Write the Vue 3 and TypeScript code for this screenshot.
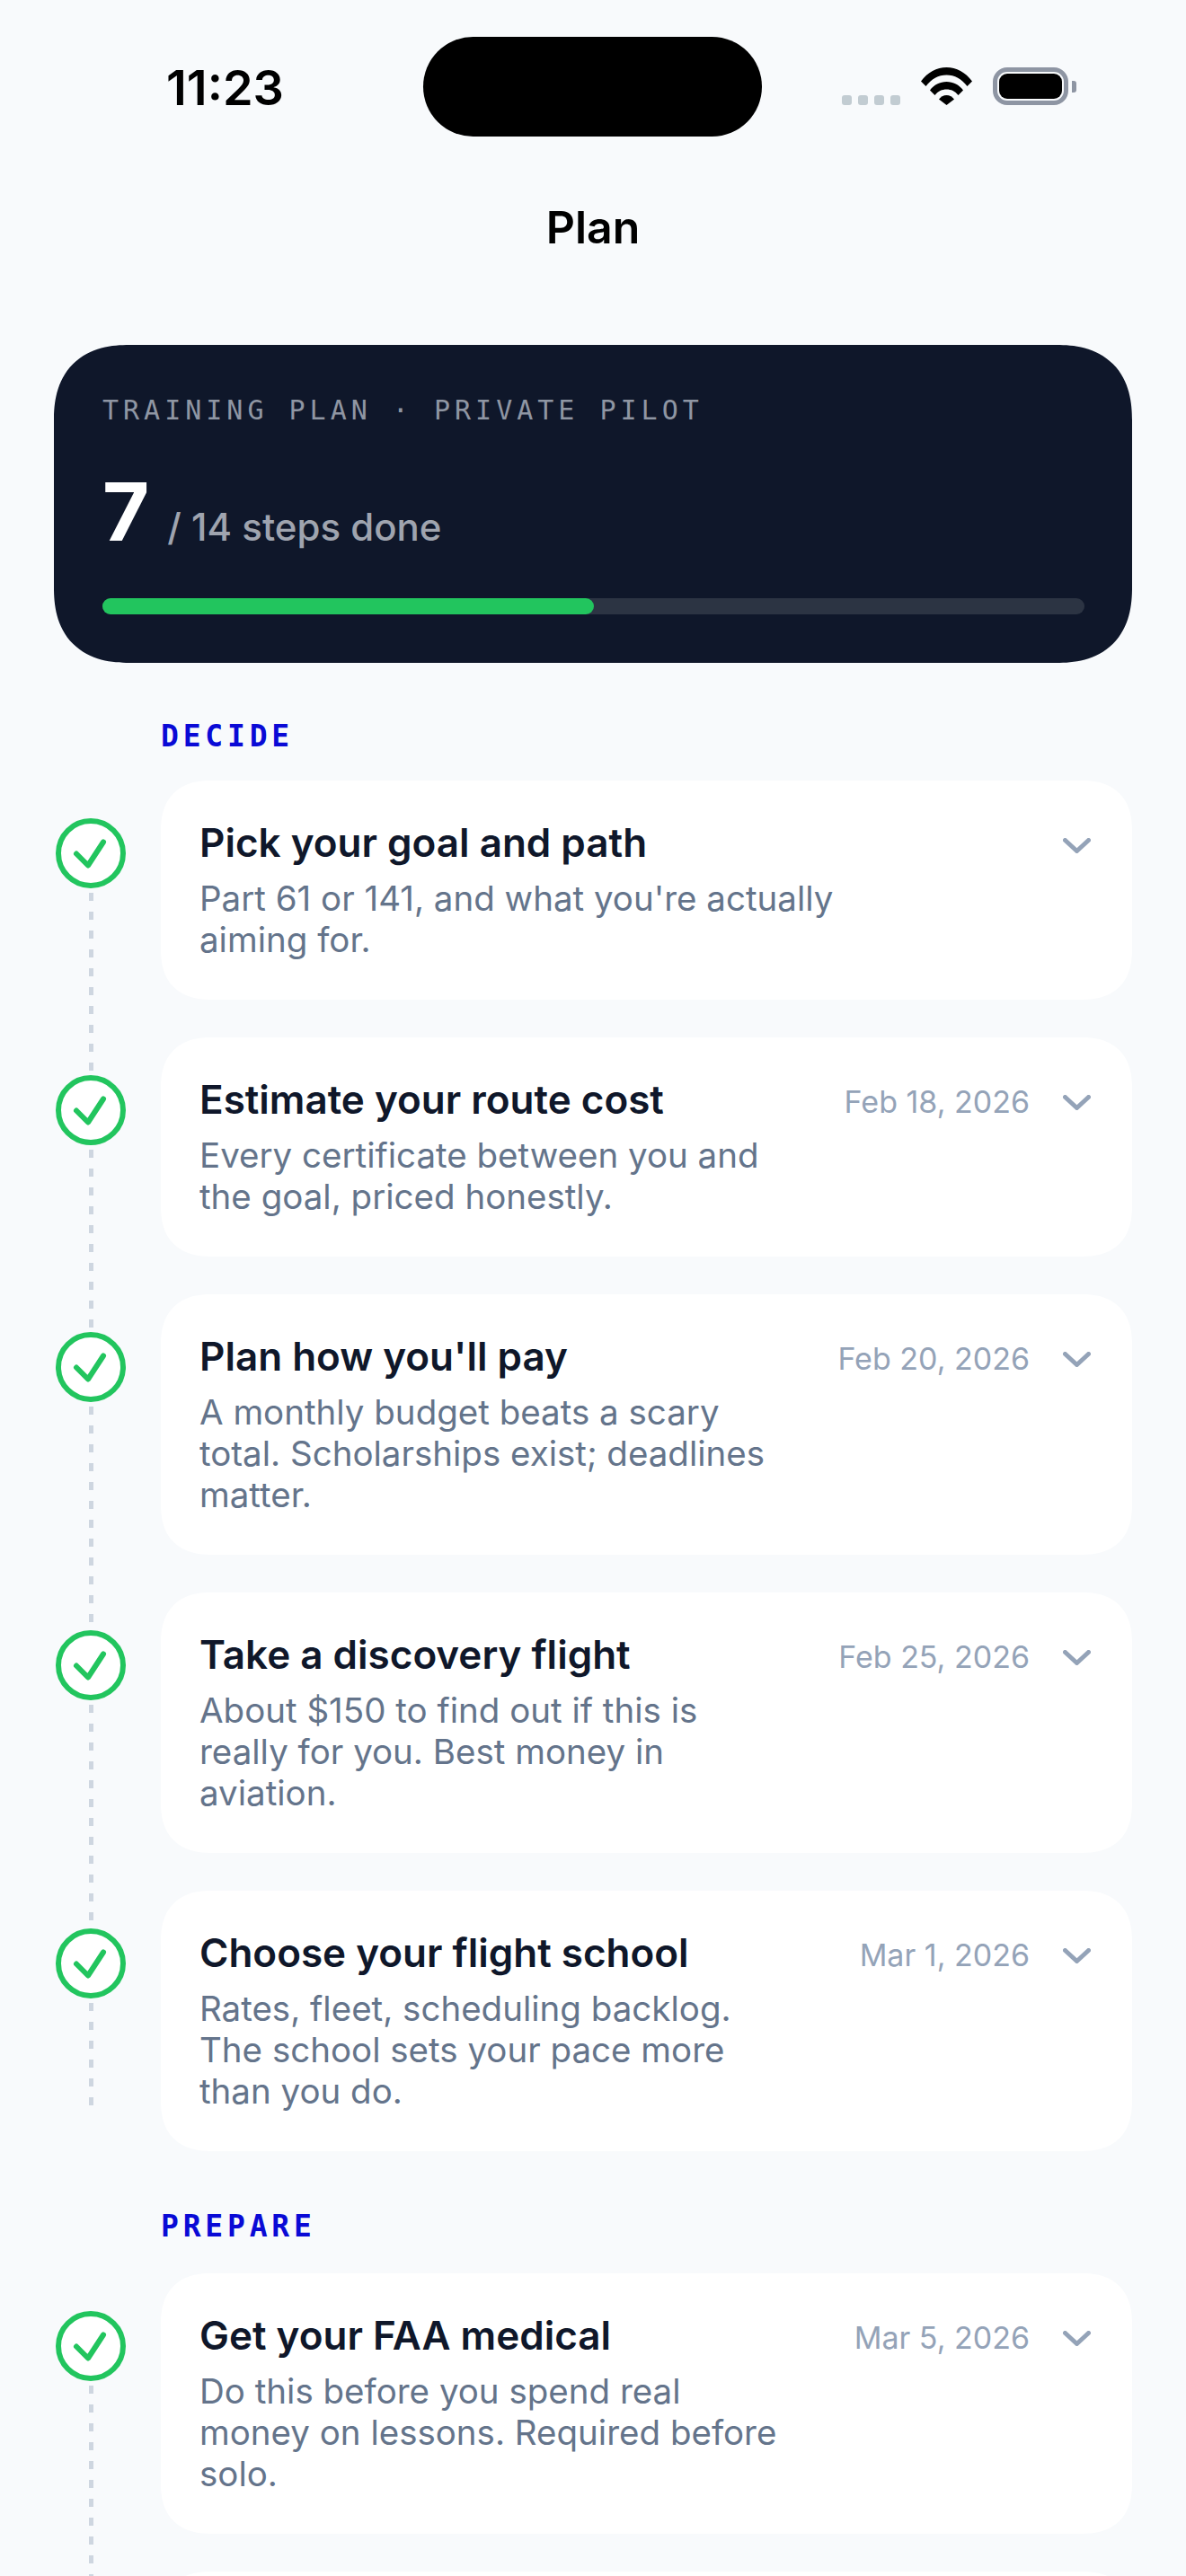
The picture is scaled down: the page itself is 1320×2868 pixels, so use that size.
<template>
  <div class="screen">
    <div class="status-bar">
      <span class="time">11:23</span>
      <div class="island"></div>
      <div class="status-right">
        <div class="signal">
          <span v-for="n in 4" :key="n" class="signal-dot"></span>
        </div>
        <svg class="wifi" width="57" height="42" viewBox="0 0 57 42">
          <path d="M0 15.500C7.500 5.500 17.500 0 28.500 0S49.500 5.500 57 15.500L51.500 21C45.500 13 37.500 8.500 28.500 8.500S11.500 13 5.500 21Z" fill="#000" />
          <path d="M10 25.500C14.500 19.500 21 16 28.500 16S42.500 19.500 47 25.500L41.500 31C38 26.500 33.500 24.500 28.500 24.500S19 26.500 15.500 31Z" fill="#000" />
          <path d="M20 35.500C22 33 25 31 28.500 31S35 33 37 35.500L28.500 42Z" fill="#000" />
        </svg>
        <div class="battery">
          <div class="battery-fill"></div>
          <div class="battery-nub"></div>
        </div>
      </div>
    </div>

    <div class="nav-title">Plan</div>

    <main class="content">
      <section class="summary">
        <div class="summary-label">TRAINING PLAN · PRIVATE PILOT</div>
        <div class="summary-count">
          <span class="count-num">{{ done }}</span>
          <span class="count-rest">/ {{ total }} steps done</span>
        </div>
        <div class="progress">
          <div class="progress-fill" :style="{ width: (done / total) * 100 + '%' }"></div>
        </div>
      </section>

      <section v-for="group in groups" :key="group.name" class="group" :class="{ 'group-closed': !group.peek }">
        <div class="group-label">{{ group.name }}</div>
        <div v-for="step in group.steps" :key="step.title" class="step">
          <div class="rail">
            <svg class="check" width="78" height="78" viewBox="0 0 78 78">
              <circle cx="39" cy="39" r="36" fill="#fff" stroke="#22c55e" stroke-width="6" />
              <path d="M23 39.500L36 52.500L53 26.500" fill="none" stroke="#22c55e" stroke-width="6" stroke-linecap="round" stroke-linejoin="round" />
            </svg>
            <div class="rail-line"></div>
          </div>
          <div class="card">
            <div class="card-body">
              <div class="card-title">{{ step.title }}</div>
              <div class="card-desc">
                <div v-for="line in step.lines" :key="line">{{ line }}</div>
              </div>
            </div>
            <span v-if="step.date" class="card-date">{{ step.date }}</span>
            <svg class="chevron" width="31" height="17" viewBox="0 0 31 17">
              <path d="M2.500 2.500L15.500 14.500L28.500 2.500" fill="none" stroke="#94a3b8" stroke-width="5" stroke-linecap="round" stroke-linejoin="round" />
            </svg>
          </div>
        </div>
        <div v-if="group.peek" class="step">
          <div class="rail"><div class="rail-line"></div></div>
          <div class="card card-peek"></div>
        </div>
      </section>
    </main>
  </div>
</template>

<script setup lang="ts">
interface Step {
  title: string;
  lines: string[];
  date?: string;
}

interface Group {
  name: string;
  steps: Step[];
  peek?: boolean;
}

const done = 7;
const total = 14;

const groups: Group[] = [
  {
    name: 'DECIDE',
    steps: [
      { title: 'Pick your goal and path', lines: ["Part 61 or 141, and what you're actually", 'aiming for.'] },
      { title: 'Estimate your route cost', lines: ['Every certificate between you and', 'the goal, priced honestly.'], date: 'Feb 18, 2026' },
      { title: "Plan how you'll pay", lines: ['A monthly budget beats a scary', 'total. Scholarships exist; deadlines', 'matter.'], date: 'Feb 20, 2026' },
      { title: 'Take a discovery flight', lines: ['About $150 to find out if this is', 'really for you. Best money in', 'aviation.'], date: 'Feb 25, 2026' },
      { title: 'Choose your flight school', lines: ['Rates, fleet, scheduling backlog.', 'The school sets your pace more', 'than you do.'], date: 'Mar 1, 2026' }
    ]
  },
  {
    name: 'PREPARE',
    peek: true,
    steps: [
      { title: 'Get your FAA medical', lines: ['Do this before you spend real', 'money on lessons. Required before', 'solo.'], date: 'Mar 5, 2026' }
    ]
  }
];
</script>

<style>
html,
body {
  margin: 0;
  background: #f8fafc;
}
</style>

<style scoped>
.screen {
  height: 2868px;
  overflow: hidden;
  background: #f8fafc;
  font-family: Inter, "Noto Sans", sans-serif;
}

.status-bar {
  display: flex;
  padding-top: 41px;
  height: 111px;
}

.time {
  width: 286px;
  padding-left: 185px;
  padding-top: 26px;
  font-size: 54px;
  font-weight: 600;
  line-height: 62px;
  color: #000;
}

.island {
  width: 377px;
  height: 111px;
  border-radius: 56px;
  background: #000;
}

.status-right {
  display: flex;
  align-items: flex-end;
  margin-left: 89px;
  height: 76px;
}

.signal {
  display: flex;
  gap: 7px;
  margin-right: 23px;
}

.signal-dot {
  width: 11px;
  height: 11px;
  border-radius: 3px;
  background: #c2ccd2;
}

.wifi {
  display: block;
  margin-right: 23px;
}

.battery {
  position: relative;
  width: 70px;
  height: 28px;
  padding: 2px;
  border: 5px solid #8e95a3;
  border-radius: 16px;
}

.battery-fill {
  height: 100%;
  border-radius: 9px;
  background: #000;
}

.battery-nub {
  position: absolute;
  top: 10px;
  right: -14px;
  width: 5px;
  height: 13px;
  border-radius: 0 3px 3px 0;
  background: #8e95a3;
}

.nav-title {
  height: 202px;
  line-height: 202px;
  margin-bottom: 30px;
  text-align: center;
  font-size: 50px;
  font-weight: 600;
  color: #000;
}

.content {
  padding: 0 60px;
}

.summary {
  box-sizing: border-box;
  height: 354px;
  padding: 55px 53px 0 54px;
  border-radius: 84px;
  corner-shape: superellipse(1.25);
  background: #0f172a;
}

.summary-label {
  font-family: "DejaVu Sans Mono", monospace;
  font-size: 30px;
  line-height: 36px;
  letter-spacing: 5px;
  color: #8f96a3;
}

.summary-count {
  display: flex;
  align-items: baseline;
  gap: 20px;
  margin-top: 40px;
}

.count-num {
  font-size: 90px;
  font-weight: 700;
  line-height: 109px;
  color: #fff;
}

.count-rest {
  font-size: 42px;
  font-weight: 500;
  color: #9fa4af;
}

.progress {
  height: 18px;
  margin-top: 42px;
  border-radius: 9px;
  background: #2c3443;
}

.progress-fill {
  height: 100%;
  border-radius: 9px;
  background: #22c55e;
}

.group-label {
  margin: 62px 0 29px 119px;
  font-family: "DejaVu Sans Mono", monospace;
  font-size: 33px;
  font-weight: 700;
  line-height: 40px;
  letter-spacing: 4.8px;
  color: #0a0ad6;
}

.group + .group .group-label {
  margin-top: 64px;
  margin-bottom: 32px;
}

.group {
  display: flex;
  flex-direction: column;
}

.step {
  display: grid;
  grid-template-columns: 80px 1fr;
  column-gap: 39px;
  padding-bottom: 42px;
}

.group-closed .step:last-child {
  padding-bottom: 0;
}

.rail {
  display: flex;
  flex-direction: column;
  align-items: center;
  margin-left: 2px;
  padding-top: 42px;
}

.check {
  display: block;
  flex-shrink: 0;
  margin-bottom: 5px;
}

.rail-line {
  flex: 1;
  width: 5px;
  margin-bottom: -79px;
  background: repeating-linear-gradient(to bottom, #ced6e0 0, #ced6e0 9px, transparent 9px, transparent 21px);
}

.group-closed .step:last-child .rail-line {
  margin-bottom: 46px;
}

.card {
  display: flex;
  align-items: flex-start;
  padding: 42px 28px 44px 43px;
  border-radius: 56px;
  corner-shape: superellipse(1.25);
  background: #fff;
}

.card-peek {
  height: 300px;
}

.card-body {
  flex: 1;
  min-width: 0;
}

.card-title {
  font-size: 44px;
  font-weight: 600;
  line-height: 54px;
  color: #0f172a;
}

.card-desc {
  margin-top: 12px;
  font-size: 38.500px;
  line-height: 46px;
  color: #64748b;
  white-space: nowrap;
}

.card-date {
  margin-top: 10px;
  font-size: 34px;
  line-height: 40px;
  color: #94a3b8;
  white-space: nowrap;
}

.chevron {
  display: block;
  flex-shrink: 0;
  margin: 22px 18px 0 37px;
}
</style>
